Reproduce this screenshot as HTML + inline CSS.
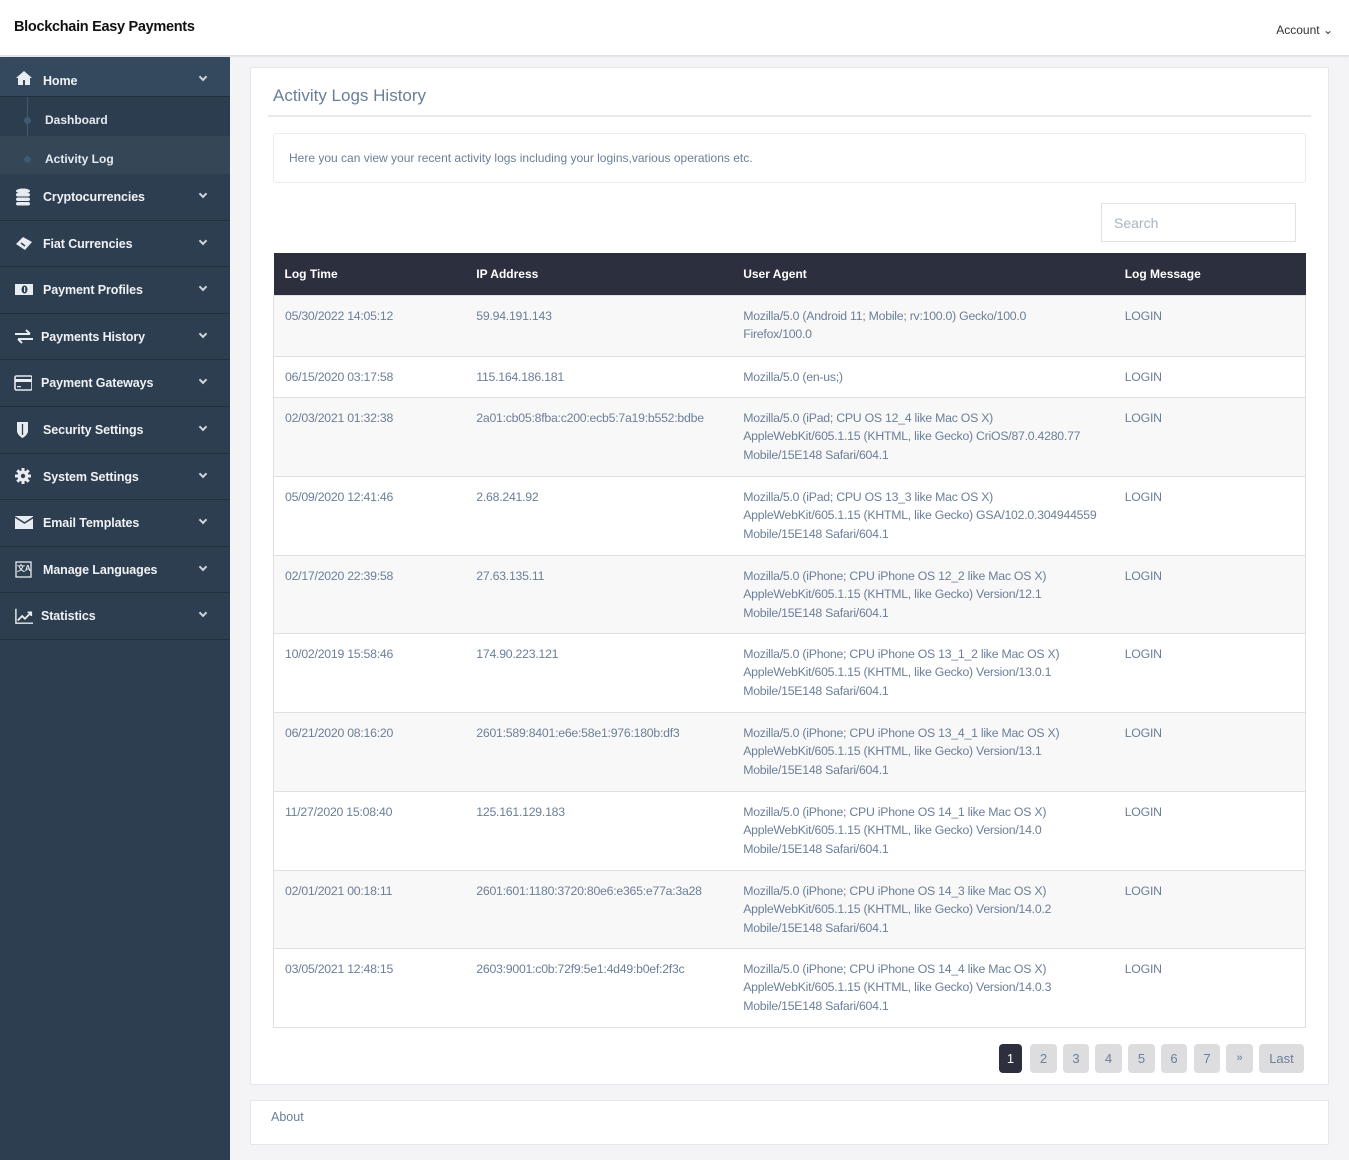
<!DOCTYPE html>
<html><head><meta charset="utf-8"><style>
*{box-sizing:border-box;margin:0;padding:0}
body{width:1349px;height:1160px;overflow:hidden;background:#f4f4f6;font-family:"Liberation Sans",sans-serif;color:#6b7f99;position:relative}
.top{position:absolute;left:0;top:0;width:1349px;height:56px;background:#fff;border-bottom:1px solid #e2e2e6;box-shadow:0 1px 2px rgba(0,0,0,.08)}
.brand{position:absolute;left:14px;top:19px;font-weight:bold;font-size:14.5px;color:#111;letter-spacing:-.3px}
.acct{position:absolute;right:16px;top:23px;font-size:12px;color:#333}
.side{position:absolute;left:0;top:57px;width:230px;height:1103px;background:#2c3e50}
.it{height:46.6px;border-bottom:1px solid #22313f;position:relative;color:#f0f2f5;font-size:12.5px;font-weight:bold;letter-spacing:-.1px}
.it .ic{position:absolute;left:15px;top:14px;width:18px;height:18px}
.it .tx{position:absolute;left:43px;top:16px}
.it .ch{position:absolute;right:24px;top:17px;width:6px;height:6px;border-right:2px solid #cfd6de;border-bottom:2px solid #cfd6de;transform:rotate(45deg)}
.home{background:#34495e;height:40px}
.home .tx{top:17px}
.sub{height:77px;background:#2c3d4f;position:relative;border-bottom:1px solid #22313f}
.sub .ln{position:absolute;left:27px;top:0;width:1px;height:77px;background:#3f5970}
.sub .r{position:absolute;left:0;width:230px;height:38px;color:#e6eaef;font-size:12px;font-weight:bold}
.sub .r span{position:absolute;left:45px;top:16px}
.sub .r i{position:absolute;left:24px;top:20px;width:7px;height:7px;border-radius:50%;background:#3f5970}
.card{position:absolute;left:250px;top:67px;width:1079px;height:1018px;background:#fff;border:1px solid #e6e6ec}
h1{position:absolute;left:22px;top:18px;font-size:17px;font-weight:normal;color:#6b7f99}
.hr{position:absolute;left:17px;top:47px;width:1043px;height:2px;background:#e6eaee}
.info{position:absolute;left:22px;top:65px;width:1033px;height:50px;border:1px solid #eaeaef;border-radius:3px;font-size:12px;padding:17px 15px}
.srch{position:absolute;left:850px;top:135px;width:195px;height:39px;border:1px solid #e2e2e6;font-size:14px;color:#a9b4c2;padding:11px 12px}
table{position:absolute;left:22px;top:185px;width:1033px;border-collapse:collapse;font-size:12.3px;letter-spacing:-.25px}
th{background:#2c2f3e;color:#fff;text-align:left;height:42px;padding:0 11px;font-size:12px;letter-spacing:0}
td{vertical-align:top;padding:11px 11px 0;line-height:18.7px;border-top:1px solid #e0e0e4}
tr.o td{background:#f8f8f8}
tbody{border:1px solid #e0e0e4}
.pg{position:absolute;top:976px;height:29px;border-radius:4px;background:#dddddf;font-size:13px;text-align:center;line-height:29px;color:#6b7f99}
.foot{position:absolute;left:250px;top:1100px;width:1079px;height:45px;background:#fff;border:1px solid #e6e6ec;font-size:12.5px;padding:9px 20px}
</style></head><body>
<div class="top"><div class="brand">Blockchain Easy Payments</div><div class="acct">Account &#8964;</div></div>
<div class="side">
<div class="it home"><svg class="ic" style="top:12px" viewBox="0 0 18 18"><path d="M9 2 1 9h2v7h5v-5h2v5h5V9h2z" fill="#e8ecf0"/></svg><span class="tx">Home</span><span class="ch" style="top:17px"></span></div>
<div class="sub"><div class="ln"></div><div class="r" style="top:0"><i></i><span>Dashboard</span></div><div class="r" style="top:39px;background:#354657"><i></i><span>Activity Log</span></div></div>
<div class="it"><svg class="ic" viewBox="0 0 18 18"><g fill="#e8ecf0"><ellipse cx="8" cy="3" rx="7" ry="2.5"/><rect x="1" y="5" width="14" height="3.5" rx="2"/><rect x="1" y="9.5" width="14" height="3.5" rx="2"/><rect x="1" y="14" width="14" height="3.5" rx="2"/></g></svg><span class="tx">Cryptocurrencies</span><span class="ch"></span></div>
<div class="it"><svg class="ic" viewBox="0 0 18 18"><path d="M1 9 8 2l9 5-7 8z" fill="#e8ecf0"/><path d="M6 8l4 3" stroke="#2c3e50" stroke-width="1.5"/></svg><span class="tx">Fiat Currencies</span><span class="ch"></span></div>
<div class="it"><svg class="ic" viewBox="0 0 18 18"><rect x="0" y="3" width="19" height="11" fill="#e8ecf0"/><ellipse cx="9.5" cy="8.5" rx="3" ry="4" fill="#2c3e50"/><rect x="9" y="6" width="1.2" height="5" fill="#e8ecf0"/></svg><span class="tx">Payment Profiles</span><span class="ch"></span></div>
<div class="it"><svg class="ic" viewBox="0 0 18 18"><path d="M0 6h15M11 2l4 4M18 11H3M7 15l-4-4" stroke="#e8ecf0" stroke-width="2" fill="none"/></svg><span class="tx" style="left:41px">Payments History</span><span class="ch"></span></div>
<div class="it"><svg class="ic" viewBox="0 0 18 18" style="left:14px"><rect x="1" y="2" width="17" height="14" rx="1.5" fill="none" stroke="#e8ecf0" stroke-width="1.6"/><rect x="1" y="5" width="17" height="3" fill="#e8ecf0"/><rect x="3" y="12" width="4" height="1.2" fill="#e8ecf0"/></svg><span class="tx" style="left:41px">Payment Gateways</span><span class="ch"></span></div>
<div class="it"><svg class="ic" viewBox="0 0 18 18"><path d="M2 1h11v9c0 4-5.5 7-5.5 7S2 14 2 10z" fill="#e8ecf0"/><path d="M7.5 3v11" stroke="#2c3e50" stroke-width="1.3"/></svg><span class="tx">Security Settings</span><span class="ch"></span></div>
<div class="it"><svg class="ic" viewBox="0 0 18 18"><circle cx="8" cy="8" r="5.5" fill="#e8ecf0"/><g stroke="#e8ecf0" stroke-width="3"><path d="M8 0v16M0 8h16M2.3 2.3l11.4 11.4M13.7 2.3 2.3 13.7"/></g><circle cx="8" cy="8" r="2.2" fill="#2c3e50"/></svg><span class="tx">System Settings</span><span class="ch"></span></div>
<div class="it"><svg class="ic" viewBox="0 0 18 18"><rect x="0" y="2" width="19" height="13" fill="#e8ecf0"/><path d="M0 3l9.5 6L19 3" stroke="#2c3e50" stroke-width="1.5" fill="none"/></svg><span class="tx">Email Templates</span><span class="ch"></span></div>
<div class="it"><svg class="ic" viewBox="0 0 18 18"><rect x="1" y="1" width="15" height="15" fill="none" stroke="#e8ecf0" stroke-width="1.3"/><text x="2" y="10" font-size="8" fill="#e8ecf0" font-family="Liberation Sans">文A</text></svg><span class="tx">Manage Languages</span><span class="ch"></span></div>
<div class="it"><svg class="ic" viewBox="0 0 20 18"><path d="M1 1v16h19" stroke="#e8ecf0" stroke-width="1.6" fill="none"/><path d="M3 14l5-5 3 3 6-6M14 5h4v4" stroke="#e8ecf0" stroke-width="2" fill="none"/></svg><span class="tx" style="left:41px">Statistics</span><span class="ch"></span></div>
</div>
<div class="card">
<h1>Activity Logs History</h1><div class="hr"></div>
<div class="info">Here you can view your recent activity logs including your logins,various operations etc.</div>
<div class="srch">Search</div>
<table>
<colgroup><col style="width:192px"><col style="width:267px"><col style="width:382px"><col style="width:192px"></colgroup>
<thead><tr><th>Log Time</th><th>IP Address</th><th>User Agent</th><th>Log Message</th></tr></thead>
<tbody>
<tr class="o" style="height:61px"><td>05/30/2022 14:05:12</td><td>59.94.191.143</td><td>Mozilla/5.0 (Android 11; Mobile; rv:100.0) Gecko/100.0<br>Firefox/100.0</td><td>LOGIN</td></tr>
<tr style="height:41px"><td>06/15/2020 03:17:58</td><td>115.164.186.181</td><td>Mozilla/5.0 (en-us;)</td><td>LOGIN</td></tr>
<tr class="o" style="height:79px"><td>02/03/2021 01:32:38</td><td>2a01:cb05:8fba:c200:ecb5:7a19:b552:bdbe</td><td>Mozilla/5.0 (iPad; CPU OS 12_4 like Mac OS X)<br>AppleWebKit/605.1.15 (KHTML, like Gecko) CriOS/87.0.4280.77<br>Mobile/15E148 Safari/604.1</td><td>LOGIN</td></tr>
<tr style="height:79px"><td>05/09/2020 12:41:46</td><td>2.68.241.92</td><td>Mozilla/5.0 (iPad; CPU OS 13_3 like Mac OS X)<br>AppleWebKit/605.1.15 (KHTML, like Gecko) GSA/102.0.304944559<br>Mobile/15E148 Safari/604.1</td><td>LOGIN</td></tr>
<tr class="o" style="height:78px"><td>02/17/2020 22:39:58</td><td>27.63.135.11</td><td>Mozilla/5.0 (iPhone; CPU iPhone OS 12_2 like Mac OS X)<br>AppleWebKit/605.1.15 (KHTML, like Gecko) Version/12.1<br>Mobile/15E148 Safari/604.1</td><td>LOGIN</td></tr>
<tr style="height:79px"><td>10/02/2019 15:58:46</td><td>174.90.223.121</td><td>Mozilla/5.0 (iPhone; CPU iPhone OS 13_1_2 like Mac OS X)<br>AppleWebKit/605.1.15 (KHTML, like Gecko) Version/13.0.1<br>Mobile/15E148 Safari/604.1</td><td>LOGIN</td></tr>
<tr class="o" style="height:79px"><td>06/21/2020 08:16:20</td><td>2601:589:8401:e6e:58e1:976:180b:df3</td><td>Mozilla/5.0 (iPhone; CPU iPhone OS 13_4_1 like Mac OS X)<br>AppleWebKit/605.1.15 (KHTML, like Gecko) Version/13.1<br>Mobile/15E148 Safari/604.1</td><td>LOGIN</td></tr>
<tr style="height:79px"><td>11/27/2020 15:08:40</td><td>125.161.129.183</td><td>Mozilla/5.0 (iPhone; CPU iPhone OS 14_1 like Mac OS X)<br>AppleWebKit/605.1.15 (KHTML, like Gecko) Version/14.0<br>Mobile/15E148 Safari/604.1</td><td>LOGIN</td></tr>
<tr class="o" style="height:78px"><td>02/01/2021 00:18:11</td><td>2601:601:1180:3720:80e6:e365:e77a:3a28</td><td>Mozilla/5.0 (iPhone; CPU iPhone OS 14_3 like Mac OS X)<br>AppleWebKit/605.1.15 (KHTML, like Gecko) Version/14.0.2<br>Mobile/15E148 Safari/604.1</td><td>LOGIN</td></tr>
<tr style="height:79px"><td>03/05/2021 12:48:15</td><td>2603:9001:c0b:72f9:5e1:4d49:b0ef:2f3c</td><td>Mozilla/5.0 (iPhone; CPU iPhone OS 14_4 like Mac OS X)<br>AppleWebKit/605.1.15 (KHTML, like Gecko) Version/14.0.3<br>Mobile/15E148 Safari/604.1</td><td>LOGIN</td></tr>
</tbody></table>
<div class="pg" style="left:748px;width:23px;background:#2c2f3e;color:#fff">1</div>
<div class="pg" style="left:779px;width:27px">2</div>
<div class="pg" style="left:812px;width:26px">3</div>
<div class="pg" style="left:844px;width:27px">4</div>
<div class="pg" style="left:877px;width:27px">5</div>
<div class="pg" style="left:910px;width:26px">6</div>
<div class="pg" style="left:943px;width:26px">7</div>
<div class="pg" style="left:975px;width:27px;font-size:11px">»</div>
<div class="pg" style="left:1008px;width:45px">Last</div>
</div>
<div class="foot">About</div>
</body></html>
